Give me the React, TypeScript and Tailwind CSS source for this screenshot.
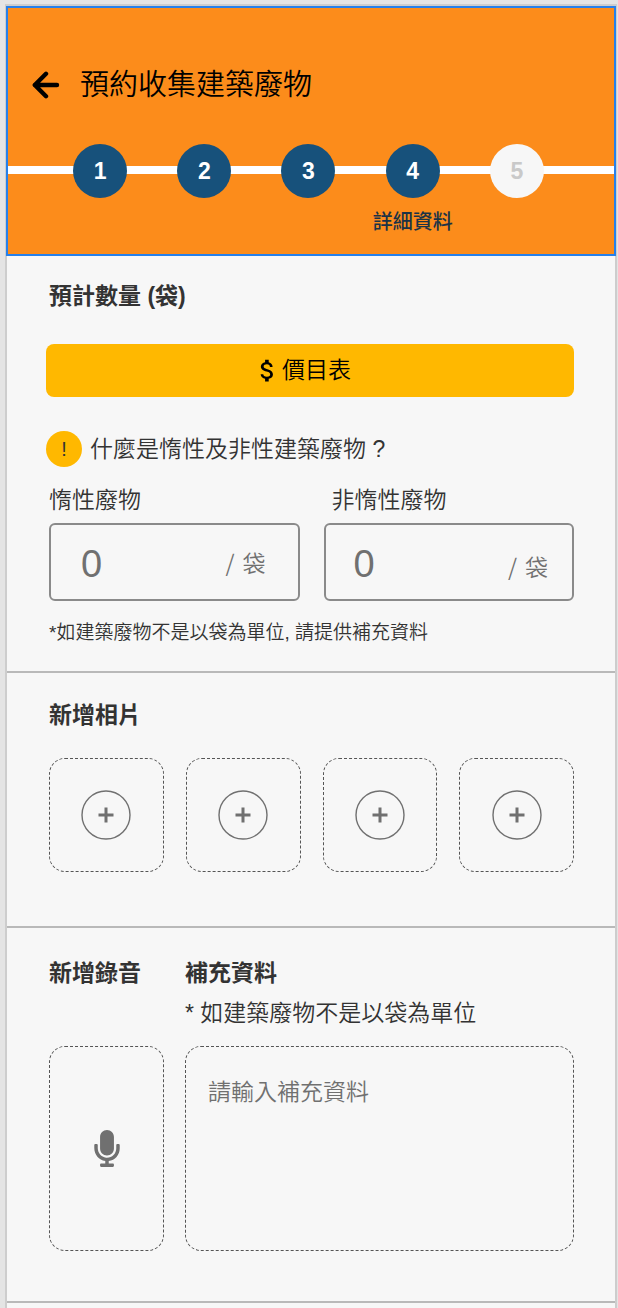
import React from 'react';
import { FaMicrophone } from 'react-icons/fa';
import { MdAttachMoney } from 'react-icons/md';

const steps = [
  { id: 1, label: '', active: true },
  { id: 2, label: '', active: true },
  { id: 3, label: '', active: true },
  { id: 4, label: '詳細資料', active: true },
  { id: 5, label: '', active: false },
];

const photos = [1, 2, 3, 4];

function Header() {
  return (
    <header className="-mx-px border-2 border-[#2680eb] bg-[#fc8c1b] pt-[57px] pb-4">
      <div className="flex items-center gap-5 pl-6">
        <button type="button" aria-label="返回" className="text-black">
          <svg viewBox="0 0 28 28" className="h-7 w-7" fill="none" stroke="currentColor" strokeWidth="4.4" strokeLinecap="round" strokeLinejoin="round">
            <path d="M14 2.8 2.8 14 14 25.2M2.8 14H25" />
          </svg>
        </button>
        <h1 className="text-[29px] leading-10 text-black">預約收集建築廢物</h1>
      </div>

      <div className="relative mt-[39px]">
        <div className="absolute inset-x-0 top-[22px] h-2 bg-white" />
        <ol className="relative mr-[45px] ml-10 grid grid-cols-5">
          {steps.map((step) => (
            <li key={step.id} className="flex flex-col items-center">
              <span
                className={`flex h-[54px] w-[54px] items-center justify-center rounded-full text-[23px] font-bold ${
                  step.active ? 'bg-[#17517b] text-white' : 'bg-[#f7f7f7] text-[#c9c9c9]'
                }`}
              >
                {step.id}
              </span>
              <span className="mt-2 h-8 text-xl leading-8 font-medium text-[#1b3346]">{step.label}</span>
            </li>
          ))}
        </ol>
      </div>
    </header>
  );
}

interface BagFieldProps {
  id: string;
  label: string;
  labelClass?: string;
  boxClass: string;
  unitClass?: string;
}

function BagField({ id, label, labelClass = '', boxClass, unitClass = '' }: BagFieldProps) {
  return (
    <div className="flex-1">
      <label htmlFor={id} className={`block text-[23px] leading-9 ${labelClass}`}>
        {label}
      </label>
      <div className={`mt-[5px] flex h-[78px] items-center rounded-md border-2 border-[#8a8a8a] text-[#707070] ${boxClass}`}>
        <input
          id={id}
          type="text"
          inputMode="numeric"
          defaultValue="0"
          className="w-0 min-w-0 flex-1 bg-transparent pt-1 text-[38px] outline-none"
        />
        <span className={`flex gap-2 font-['Noto_Sans_CJK_TC',sans-serif] text-[23px] ${unitClass}`}>
          <span>/</span>
          <span>袋</span>
        </span>
      </div>
    </div>
  );
}

function QuantitySection() {
  return (
    <section className="border-b-2 border-[#b9b9b9] pt-5 pr-[41px] pb-[22px] pl-[42px]">
      <h2 className="text-[23px] leading-10 font-bold">預計數量 (袋)</h2>
      <button
        type="button"
        className="mt-7 -ml-[3px] flex h-[53px] w-[calc(100%+3px)] items-center justify-center rounded-lg bg-[#ffb800] pr-4 text-[23px] text-black"
      >
        <MdAttachMoney className="h-[29px] w-[29px]" />
        價目表
      </button>
      <a href="#waste-types" className="mt-8 -ml-[3px] flex items-center gap-2 text-[23px] leading-10">
        <span className="flex h-9 w-9 items-center justify-center rounded-full bg-[#ffb800] text-xl">!</span>
        什麼是惰性及非性建築廢物 ?
      </a>
      <div className="mt-[13px] flex gap-6">
        <BagField id="inert" label="惰性廢物" boxClass="pl-[30px] pr-8" />
        <BagField id="non-inert" label="非惰性廢物" labelClass="pl-2" boxClass="pl-7 pr-6" unitClass="pt-2" />
      </div>
      <p className="mt-4 text-[19px] leading-8">*如建築廢物不是以袋為單位, 請提供補充資料</p>
    </section>
  );
}

function PhotoSection() {
  return (
    <section className="border-b-2 border-[#b9b9b9] pt-[22px] pr-[41px] pb-[54px] pl-[42px]">
      <h2 className="text-[23px] leading-10 font-bold">新增相片</h2>
      <div className="mt-[23px] grid grid-cols-4 gap-[22px]">
        {photos.map((photo) => (
          <button
            key={photo}
            type="button"
            aria-label={`新增相片 ${photo}`}
            className="flex h-[114px] items-center justify-center rounded-2xl border border-dashed border-[#555555]"
          >
            <svg viewBox="0 0 50 50" className="h-[50px] w-[50px]" fill="none" stroke="#707070">
              <circle cx="25" cy="25" r="24" strokeWidth="1.4" />
              <path d="M25 17.5v15M17.5 25h15" strokeWidth="3" />
            </svg>
          </button>
        ))}
      </div>
    </section>
  );
}

function NotesSection() {
  return (
    <section className="flex gap-[21px] border-b-2 border-[#b9b9b9] pt-[25px] pr-[41px] pb-[50px] pl-[42px]">
      <div className="flex w-[115px] flex-col">
        <h2 className="text-[23px] leading-10 font-bold">新增錄音</h2>
        <button
          type="button"
          aria-label="錄音"
          className="mt-auto flex h-[205px] items-center justify-center rounded-2xl border border-dashed border-[#555555] text-[#707070]"
        >
          <FaMicrophone className="h-[37px] w-[26px]" />
        </button>
      </div>
      <div className="flex flex-1 flex-col">
        <h2 className="text-[23px] leading-10 font-bold">
          <label htmlFor="notes">補充資料</label>
        </h2>
        <p className="text-[23px] leading-10">* 如建築廢物不是以袋為單位</p>
        <textarea
          id="notes"
          placeholder="請輸入補充資料"
          className="mt-[13px] h-[205px] resize-none rounded-2xl border border-dashed border-[#555555] px-[22px] py-[25px] text-[23px] leading-10 outline-none placeholder:text-[#707070]"
        />
      </div>
    </section>
  );
}

export default function App() {
  return (
    <div className="min-h-screen bg-[#e4e4e4] pt-1 pr-px pl-[5px]">
      <main className="border-2 border-b-0 border-[#cdcdcd] bg-[#f7f7f7] pb-2 font-['Liberation_Sans','Noto_Sans_CJK_TC',sans-serif] font-[350] text-[#333333]">
        <Header />
        <QuantitySection />
        <PhotoSection />
        <NotesSection />
      </main>
    </div>
  );
}
